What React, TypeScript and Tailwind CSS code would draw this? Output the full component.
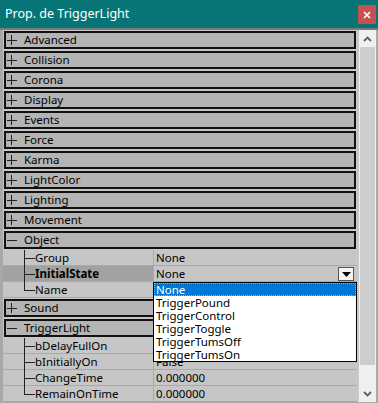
import React from "react";

const font = { fontFamily: '"Noto Sans", "Segoe UI", Arial, sans-serif' };

function Category({ label, open }: { label: string; open?: boolean }) {
  return (
    <div className="h-[20px] pt-[1px] pl-[1px] pr-[1px]">
      <div className="h-[18px] border-2 border-[#111] bg-[#b4b4b4] flex items-center">
        <span className="pl-[1px] w-[18px] flex items-center">
          <svg width="10" height="10" viewBox="0 0 10 10">
            <line x1="0" y1="5.5" x2="10" y2="5.5" stroke="#222" strokeWidth="1" />
            {!open && <line x1="4.5" y1="0" x2="4.5" y2="10" stroke="#222" strokeWidth="1" />}
          </svg>
        </span>
        <span className="text-[11.5px] text-black leading-none">{label}</span>
      </div>
    </div>
  );
}

function Prop({
  name,
  value,
  last,
  selected,
  dropdown,
}: {
  name: string;
  value: string;
  last?: boolean;
  selected?: boolean;
  dropdown?: boolean;
}) {
  return (
    <div className="h-[16px] flex border-b border-[#a9a9a9] bg-[#c6c6c6]">
      <div className={`w-[150px] relative flex items-center ${selected ? "bg-[#a2a2a2]" : ""}`}>
        <div
          className={`absolute left-[21px] top-0 w-px bg-[#222] ${last ? "h-[8px]" : "h-[17px]"}`}
        />
        <div className="absolute left-[21px] top-[8px] w-[11px] h-px bg-[#222]" />
        <span
          className={`pl-[32px] text-[11.5px] leading-none text-black ${selected ? "font-bold" : ""}`}
        >
          {name}
        </span>
      </div>
      <div className="w-px bg-[#a9a9a9]" />
      <div className="flex-1 flex items-center pl-[2px] relative">
        <span className="text-[11.5px] leading-none text-black">{value}</span>
        {dropdown && (
          <div className="absolute right-[3px] top-[1px] w-[16px] h-[14px] bg-[#f4f4f4] border border-[#555] flex items-center justify-center">
            <svg width="9" height="5" viewBox="0 0 9 5">
              <polygon points="0,0 9,0 4.5,5" fill="#000" />
            </svg>
          </div>
        )}
      </div>
    </div>
  );
}

export default function App() {
  const items = ["None", "TriggerPound", "TriggerControl", "TriggerToggle", "TriggerTumsOff", "TriggerTumsOn"];
  return (
    <div className="w-[378px] h-[403px] bg-[#a0a0a0] flex flex-col overflow-hidden relative" style={font}>
      <div className="h-[28px] bg-[#077575] flex items-center justify-between shrink-0">
        <span className="text-white text-[12.5px] pl-[5px]">Prop. de TriggerLight</span>
        <div className="w-[18px] h-[19px] mr-[2px] mt-[1px] bg-[#c75050] flex items-center justify-center">
          <svg width="8" height="8" viewBox="0 0 8 8">
            <path d="M1 1 L7 7 M7 1 L1 7" stroke="#fff" strokeWidth="1.6" />
          </svg>
        </div>
      </div>
      <div className="h-[2px] bg-[#7a7a7a] shrink-0" />
      <div className="flex flex-1 pl-[3px] pr-[2px] pb-[1px] bg-[#a8a8a8]">
        <div className="w-[354px] bg-[#c8c8c8] flex flex-col">
          <Category label="Advanced" />
          <Category label="Collision" />
          <Category label="Corona" />
          <Category label="Display" />
          <Category label="Events" />
          <Category label="Force" />
          <Category label="Karma" />
          <Category label="LightColor" />
          <Category label="Lighting" />
          <Category label="Movement" />
          <Category label="Object" open />
          <Prop name="Group" value="None" />
          <Prop name="InitialState" value="None" selected dropdown />
          <Prop name="Name" value="None" last />
          <Category label="Sound" />
          <Category label="TriggerLight" open />
          <Prop name="bDelayFullOn" value="False" />
          <Prop name="bInitiallyOn" value="False" />
          <Prop name="ChangeTime" value="0.000000" />
          <Prop name="RemainOnTime" value="0.000000" last />
        </div>
        <div className="w-[2px] bg-[#c8c8c8]" />
        <div className="w-[17px] bg-[#f0f0f0] flex flex-col items-center">
          <div className="h-[17px] w-full flex items-center justify-center">
            <svg width="9" height="6" viewBox="0 0 9 6">
              <path d="M1 5 L4.5 1.5 L8 5" stroke="#606060" strokeWidth="1.8" fill="none" />
            </svg>
          </div>
          <div className="w-[15px] h-[318px] bg-[#cdcdcd]" />
          <div className="flex-1" />
          <div className="h-[17px] w-full flex items-center justify-center">
            <svg width="9" height="6" viewBox="0 0 9 6">
              <path d="M1 1 L4.5 4.5 L8 1" stroke="#606060" strokeWidth="1.8" fill="none" />
            </svg>
          </div>
        </div>
      </div>
      <div className="absolute left-[153px] top-[282px] w-[204px] h-[80px] bg-white border border-black flex flex-col">
        {items.map((it, i) => (
          <div
            key={it}
            className={`h-[13px] flex items-center pl-[2px] text-[11.5px] leading-none ${
              i === 0 ? "bg-[#0078d7] text-white outline-1 outline-dotted outline-[#f0a030] -outline-offset-1" : "text-black"
            }`}
          >
            {it}
          </div>
        ))}
      </div>
    </div>
  );
}
